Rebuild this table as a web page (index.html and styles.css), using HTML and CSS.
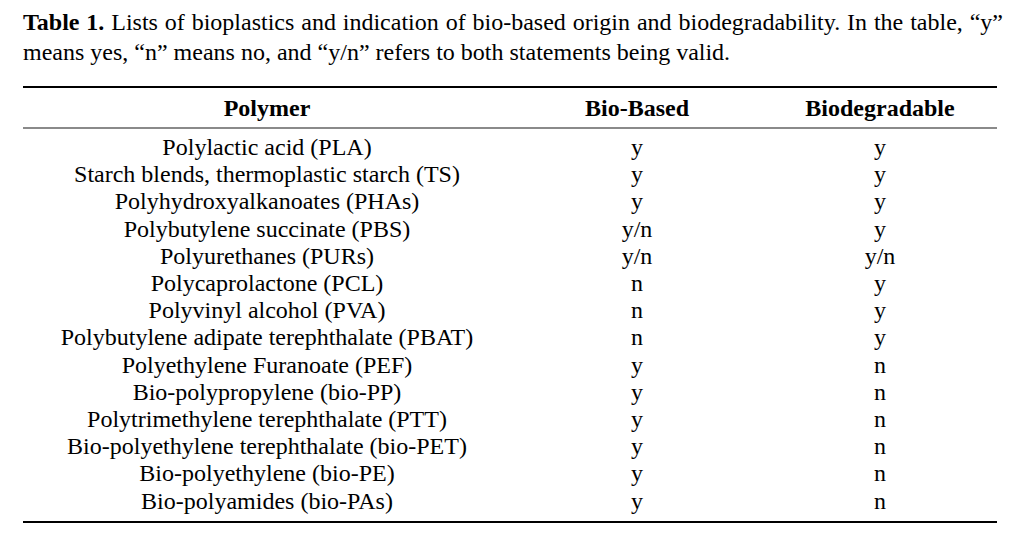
FILE: index.html
```html
<!DOCTYPE html>
<html>
<head>
<meta charset="utf-8">
<link rel="stylesheet" href="styles.css">
</head>
<body>
<div class="page">
  <p class="caption"><b>Table 1.</b> <span>Lists of bioplastics and indication of bio-based origin and biodegradability. In the table, “y”</span> <span>means yes, “n” means no, and “y/n” refers to both statements being valid.</span></p>
  <table class="data">
    <colgroup><col class="c1"><col class="c2"><col class="c3"></colgroup>
    <thead>
      <tr><th>Polymer</th><th>Bio-Based</th><th>Biodegradable</th></tr>
    </thead>
    <tbody>
      <tr class="first"><td>Polylactic acid (PLA)</td><td>y</td><td>y</td></tr>
      <tr><td>Starch blends, thermoplastic starch (TS)</td><td>y</td><td>y</td></tr>
      <tr><td>Polyhydroxyalkanoates (PHAs)</td><td>y</td><td>y</td></tr>
      <tr><td>Polybutylene succinate (PBS)</td><td>y/n</td><td>y</td></tr>
      <tr><td>Polyurethanes (PURs)</td><td>y/n</td><td>y/n</td></tr>
      <tr><td>Polycaprolactone (PCL)</td><td>n</td><td>y</td></tr>
      <tr><td>Polyvinyl alcohol (PVA)</td><td>n</td><td>y</td></tr>
      <tr><td>Polybutylene adipate terephthalate (PBAT)</td><td>n</td><td>y</td></tr>
      <tr><td>Polyethylene Furanoate (PEF)</td><td>y</td><td>n</td></tr>
      <tr><td>Bio-polypropylene (bio-PP)</td><td>y</td><td>n</td></tr>
      <tr><td>Polytrimethylene terephthalate (PTT)</td><td>y</td><td>n</td></tr>
      <tr><td>Bio-polyethylene terephthalate (bio-PET)</td><td>y</td><td>n</td></tr>
      <tr><td>Bio-polyethylene (bio-PE)</td><td>y</td><td>n</td></tr>
      <tr class="last"><td>Bio-polyamides (bio-PAs)</td><td>y</td><td>n</td></tr>
    </tbody>
  </table>
</div>
</body>
</html>
```
FILE: styles.css
```css
html, body {
  margin: 0;
  padding: 0;
  background: #fff;
}
body {
  font-family: "Liberation Serif", "DejaVu Serif", serif;
  color: #000;
}
.page {
  padding: 8px 25px 0 23px;
}
.caption {
  margin: 0;
  font-size: 24px;
  line-height: 29.5px;
  text-align: justify;
}
.data {
  margin-top: 19px;
  width: 974px;
  border-collapse: collapse;
  table-layout: fixed;
  border-top: 2px solid #000;
  border-bottom: 2px solid #000;
  font-size: 24px;
}
.c1 { width: 488px; }
.c2 { width: 252px; }
.c3 { width: 234px; }
.data th {
  font-weight: bold;
  height: 39px;
  padding: 7px 0 5px;
  box-sizing: border-box;
  text-align: center;
  border-bottom: 2px solid #8a8a8a;
  line-height: 27px;
}
.data td {
  padding: 0;
  text-align: center;
  height: 27.2px;
  line-height: 27.2px;
}
.data tr.first td { padding-top: 5px; }
.data tr.last td { padding-bottom: 6px; }
```
